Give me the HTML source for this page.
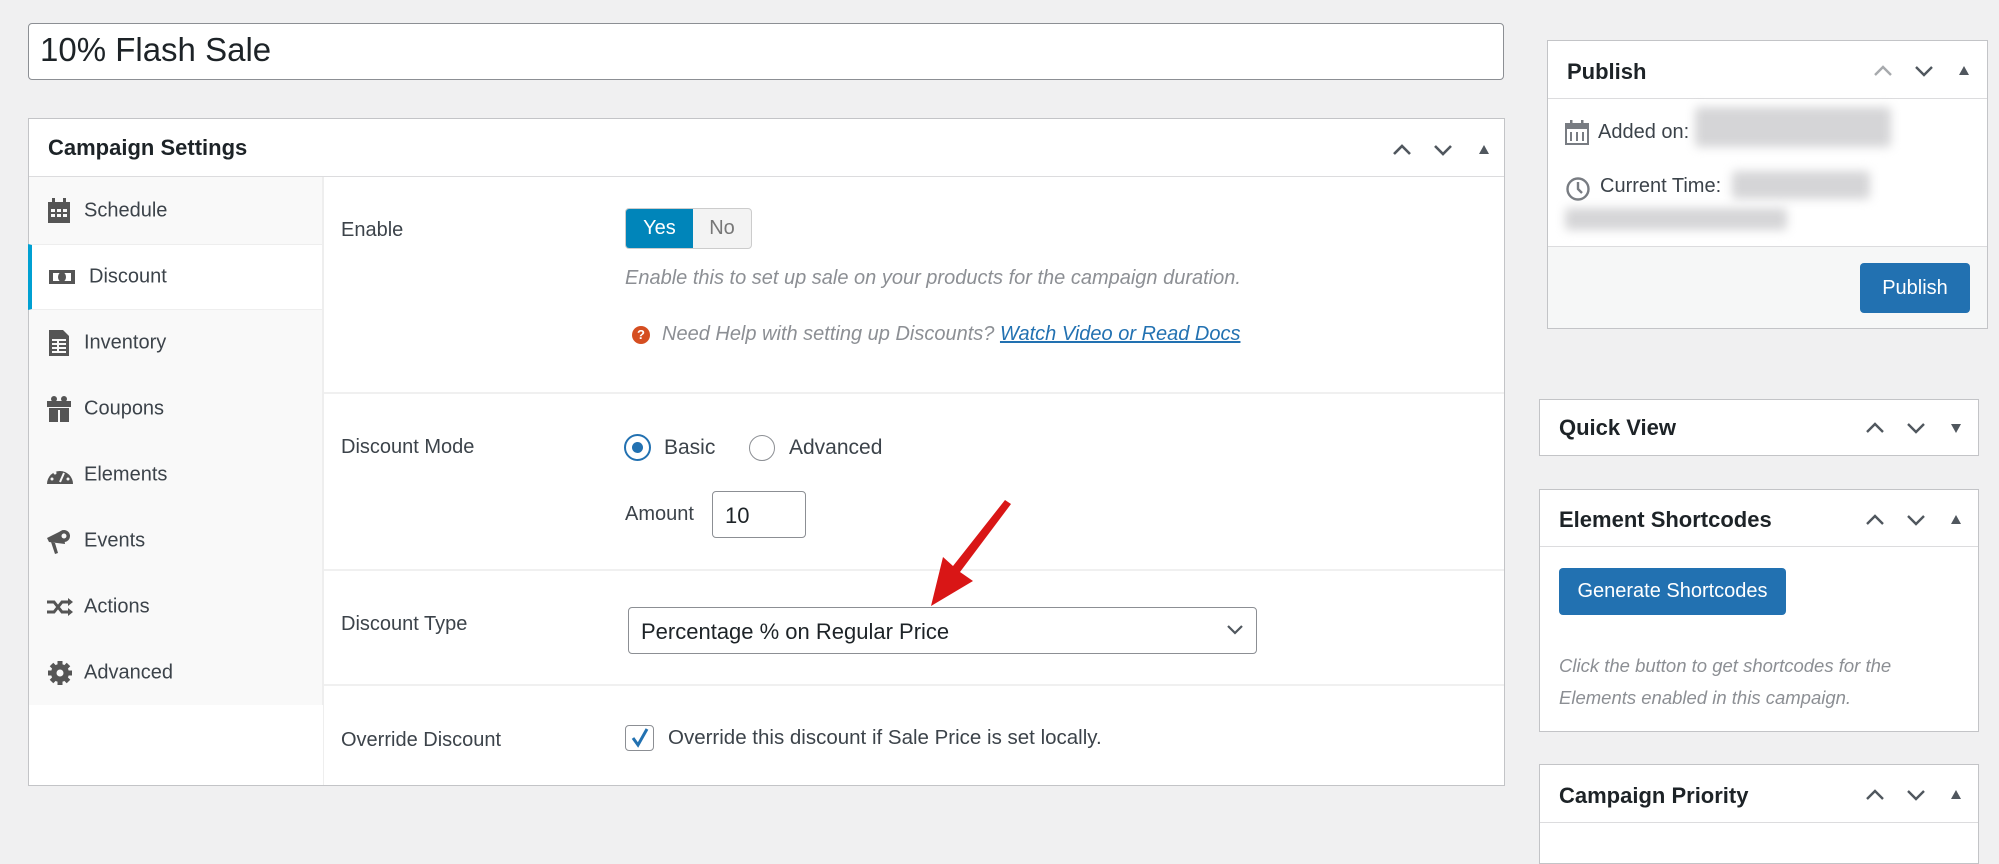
<!DOCTYPE html>
<html><head><meta charset="utf-8"><style>
*{box-sizing:border-box;margin:0;padding:0}
body{width:1999px;height:841px;background:#f0f0f1;font-family:"Liberation Sans",sans-serif;color:#3c434a;position:relative;overflow:hidden}
.a{position:absolute}
.box{position:absolute;background:#fff;border:1px solid #c3c4c7}
.hd{position:absolute;left:0;right:0;top:0;border-bottom:1px solid #dcdcde}
.ht{position:absolute;font-weight:bold;font-size:22px;color:#1d2327}
.lbl{position:absolute;left:341px;font-size:20px;color:#3c434a}
.nav{position:absolute;left:0;width:294px;height:66px;font-size:20px;color:#3c434a}
.nav span{position:absolute;left:55px;top:50%;transform:translateY(-50%)}
.nav svg{position:absolute;left:18px;top:50%;transform:translateY(-50%)}
.blur{position:absolute;background:#d5d5d7;filter:blur(5px);border-radius:4px}
</style></head><body>

<div class="a" style="left:28px;top:23px;width:1476px;height:57px;background:#fff;border:1px solid #8c8f94;border-radius:4px"></div>
<div class="a" style="left:40px;top:31px;font-size:33px;color:#1d2327">10% Flash Sale</div>

<div class="box" style="left:28px;top:118px;width:1477px;height:668px">
  <div class="hd" style="height:58px"></div>
  <div class="ht" style="left:19px;top:16px">Campaign Settings</div>
  <svg class="a" style="left:1362px;top:20px" width="110" height="22" viewBox="0 0 110 22">
    <path d="M3 15 L11 7 L19 15" stroke="#50575e" stroke-width="2.6" fill="none"/>
    <path d="M44 7 L52 15 L60 7" stroke="#50575e" stroke-width="2.6" fill="none"/>
    <path d="M88 15 L93 6 L98 15Z" fill="#50575e"/>
  </svg>
  <div class="a" style="left:0;top:58px;width:294px;height:528px;background:#f9f9f9;border-right:1px solid #eee"></div>
  <div class="a" style="left:294px;top:58px;width:1px;height:608px;background:#eee"></div>
  <div class="nav" style="top:59px"><svg width="24" height="26" viewBox="0 0 24 26"><rect x="1" y="4" width="22" height="21" fill="#555"/><rect x="5" y="0" width="3" height="6" fill="#555"/><rect x="16" y="0" width="3" height="6" fill="#555"/><g fill="#f9f9f9"><rect x="4" y="11" width="4" height="3"/><rect x="10" y="11" width="4" height="3"/><rect x="16" y="11" width="4" height="3"/><rect x="4" y="16" width="4" height="3"/><rect x="10" y="16" width="4" height="3"/><rect x="16" y="16" width="4" height="3"/></g></svg><span>Schedule</span></div>
  <div class="nav" style="top:125px;background:#fff;border-top:1px solid #eee;border-bottom:1px solid #eee;border-left:4px solid #00a0d2;left:-1px"><svg width="26" height="16" viewBox="0 0 26 16" style="left:17px"><rect x="0" y="1" width="26" height="14" fill="#555"/><rect x="4" y="4" width="18" height="8" fill="#fff"/><ellipse cx="13" cy="8" rx="4" ry="5" fill="#555"/></svg><span style="left:57px">Discount</span></div>
  <div class="nav" style="top:191px"><svg width="20" height="26" viewBox="0 0 20 26" style="left:20px"><path d="M0 0H14L20 6V26H0Z" fill="#555"/><g fill="#f9f9f9"><rect x="3" y="9" width="14" height="2"/><rect x="3" y="13" width="14" height="2"/><rect x="3" y="17" width="14" height="2"/><rect x="3" y="21" width="14" height="2"/><rect x="8" y="9" width="2" height="14"/></g></svg><span>Inventory</span></div>
  <div class="nav" style="top:257px"><svg width="24" height="26" viewBox="0 0 24 26"><rect x="0" y="5" width="24" height="6" fill="#555"/><rect x="2" y="12" width="20" height="14" fill="#555"/><circle cx="7" cy="3" r="3" fill="#555"/><circle cx="17" cy="3" r="3" fill="#555"/><rect x="11" y="14" width="2" height="12" fill="#f9f9f9"/></svg><span>Coupons</span></div>
  <div class="nav" style="top:323px"><svg width="26" height="18" viewBox="0 0 26 18"><path d="M0 18 A13 13 0 0 1 26 18Z" fill="#555"/><path d="M13 16 L17 7" stroke="#f9f9f9" stroke-width="2"/><circle cx="5" cy="13" r="1.5" fill="#f9f9f9"/><circle cx="8" cy="7" r="1.5" fill="#f9f9f9"/><circle cx="21" cy="13" r="1.5" fill="#f9f9f9"/></svg><span>Elements</span></div>
  <div class="nav" style="top:389px"><svg width="24" height="26" viewBox="0 0 24 26"><path d="M0 10 L16 2 L18 16 L2 14Z" fill="#555"/><circle cx="17" cy="8" r="6" fill="#555"/><circle cx="17" cy="8" r="2.5" fill="#f9f9f9"/><path d="M4 14 L8 26 L11 25 L8 15Z" fill="#555"/></svg><span>Events</span></div>
  <div class="nav" style="top:455px"><svg width="26" height="18" viewBox="0 0 26 18"><path d="M0 4H7L15 14H22M0 14H7L15 4H22" stroke="#555" stroke-width="3" fill="none"/><path d="M21 0L26 4L21 8Z M21 10L26 14L21 18Z" fill="#555"/></svg><span>Actions</span></div>
  <div class="nav" style="top:521px"><svg width="26" height="26" viewBox="0 0 26 26"><circle cx="13" cy="13" r="9" fill="#555"/><g stroke="#555" stroke-width="5"><path d="M13 1V25M1 13H25M4.5 4.5L21.5 21.5M21.5 4.5L4.5 21.5"/></g><circle cx="13" cy="13" r="3.5" fill="#f9f9f9"/></svg><span>Advanced</span></div>

  <div class="a" style="left:295px;right:0;top:273px;height:2px;background:#f0f0f0"></div>
  <div class="a" style="left:295px;right:0;top:450px;height:2px;background:#f0f0f0"></div>
  <div class="a" style="left:295px;right:0;top:565px;height:2px;background:#f0f0f0"></div>
</div>

<div class="lbl" style="top:219px">Enable</div>
<div class="a" style="left:625px;top:208px;width:127px;height:41px;border:1px solid #ccc;border-radius:4px;background:#f3f3f3;overflow:hidden">
  <div class="a" style="left:0;top:0;width:67px;height:41px;background:#0085ba;color:#fff;font-size:20px;text-align:center;line-height:39px">Yes</div>
  <div class="a" style="left:67px;top:0;width:58px;height:41px;color:#777;font-size:20px;text-align:center;line-height:39px">No</div>
</div>
<div class="a" style="left:625px;top:267px;font-size:20px;font-style:italic;color:#8c8f94;white-space:nowrap">Enable this to set up sale on your products for the campaign duration.</div>
<div class="a" style="left:632px;top:326px;width:18px;height:18px;border-radius:50%;background:#d54e21;color:#fff;font-size:13px;font-weight:bold;text-align:center;line-height:18px">?</div>
<div class="a" style="left:662px;top:323px;font-size:20px;font-style:italic;color:#8c8f94;white-space:nowrap">Need Help with setting up Discounts? <span style="color:#2271b1;text-decoration:underline">Watch Video or Read Docs</span></div>

<div class="lbl" style="top:436px">Discount Mode</div>
<div class="a" style="left:624px;top:434px;width:27px;height:27px;border-radius:50%;border:2px solid #2271b1;background:#fff"><div class="a" style="left:6px;top:6px;width:11px;height:11px;border-radius:50%;background:#2271b1"></div></div>
<div class="a" style="left:664px;top:436px;font-size:21px;color:#3c434a">Basic</div>
<div class="a" style="left:749px;top:435px;width:26px;height:26px;border-radius:50%;border:1px solid #8c8f94;background:#fff"></div>
<div class="a" style="left:789px;top:436px;font-size:21px;color:#3c434a">Advanced</div>
<div class="a" style="left:625px;top:503px;font-size:20px;color:#3c434a">Amount</div>
<div class="a" style="left:712px;top:491px;width:94px;height:47px;border:1px solid #8c8f94;border-radius:4px;background:#fff;font-size:22px;color:#1d2327;padding:11px 0 0 12px">10</div>

<div class="lbl" style="top:613px">Discount Type</div>
<div class="a" style="left:628px;top:607px;width:629px;height:47px;border:1px solid #8c8f94;border-radius:4px;background:#fff;font-size:22px;color:#1d2327;padding:11px 0 0 12px">Percentage % on Regular Price</div>
<svg class="a" style="left:1226px;top:624px" width="18" height="12" viewBox="0 0 18 12"><path d="M2 2L9 9L16 2" stroke="#50575e" stroke-width="2.2" fill="none"/></svg>

<div class="lbl" style="top:729px">Override Discount</div>
<div class="a" style="left:625px;top:725px;width:29px;height:26px;border:1px solid #8c8f94;border-radius:4px;background:#fff"></div>
<svg class="a" style="left:629px;top:726px" width="22" height="24" viewBox="0 0 22 24"><path d="M4 12 L9 19 L18 3" stroke="#2271b1" stroke-width="3" fill="none"/></svg>
<div class="a" style="left:668px;top:726px;font-size:20.5px;color:#3c434a;white-space:nowrap">Override this discount if Sale Price is set locally.</div>

<svg class="a" style="left:0;top:0" width="1999" height="841">
  <path d="M931 606 L943 557 L953 566 L1005 500 L1011 504 L960 572 L973 581 Z" fill="#d91616"/>
</svg>

<div class="box" style="left:1547px;top:40px;width:441px;height:289px">
  <div class="hd" style="height:58px"></div>
  <div class="ht" style="left:19px;top:18px">Publish</div>
  <svg class="a" style="left:324px;top:19px" width="110" height="22" viewBox="0 0 110 22"><path d="M3 15 L11 7 L19 15" stroke="#a7aaad" stroke-width="2.4" fill="none"/><path d="M44 7 L52 15 L60 7" stroke="#50575e" stroke-width="2.4" fill="none"/><path d="M87 15 L92 6 L97 15Z" fill="#50575e"/></svg>
  <svg class="a" style="left:17px;top:78px" width="24" height="26" viewBox="0 0 24 26"><rect x="1" y="5" width="22" height="20" fill="none" stroke="#787c82" stroke-width="2"/><rect x="1" y="5" width="22" height="5" fill="#787c82"/><rect x="5" y="1" width="2.5" height="6" fill="#787c82"/><rect x="16" y="1" width="2.5" height="6" fill="#787c82"/><g fill="#787c82"><rect x="5" y="13" width="2" height="9"/><rect x="11" y="13" width="2" height="9"/><rect x="17" y="13" width="2" height="9"/></g></svg>
  <div class="a" style="left:50px;top:80px;font-size:20px;color:#3c434a">Added on:</div>
  <div class="blur" style="left:147px;top:66px;width:196px;height:40px"></div>
  <svg class="a" style="left:17px;top:135px" width="26" height="26" viewBox="0 0 26 26"><circle cx="13" cy="13" r="10.5" fill="none" stroke="#787c82" stroke-width="2.4"/><path d="M13 6V13L17 17" stroke="#787c82" stroke-width="2.4" fill="none"/></svg>
  <div class="a" style="left:52px;top:134px;font-size:20px;color:#3c434a">Current Time:</div>
  <div class="blur" style="left:184px;top:130px;width:138px;height:28px"></div>
  <div class="blur" style="left:17px;top:167px;width:222px;height:22px"></div>
  <div class="a" style="left:0;right:0;top:205px;bottom:0;background:#f6f7f7;border-top:1px solid #dcdcde"></div>
  <div class="a" style="left:312px;top:222px;width:110px;height:50px;background:#2271b1;border-radius:4px;color:#fff;font-size:20px;text-align:center;line-height:50px">Publish</div>
</div>

<div class="box" style="left:1539px;top:399px;width:440px;height:57px">
  <div class="ht" style="left:19px;top:15px">Quick View</div>
  <svg class="a" style="left:324px;top:17px" width="110" height="22" viewBox="0 0 110 22"><path d="M3 15 L11 7 L19 15" stroke="#50575e" stroke-width="2.4" fill="none"/><path d="M44 7 L52 15 L60 7" stroke="#50575e" stroke-width="2.4" fill="none"/><path d="M87 7 L92 16 L97 7Z" fill="#50575e"/></svg>
</div>

<div class="box" style="left:1539px;top:489px;width:440px;height:243px">
  <div class="hd" style="height:57px"></div>
  <div class="ht" style="left:19px;top:17px">Element Shortcodes</div>
  <svg class="a" style="left:324px;top:19px" width="110" height="22" viewBox="0 0 110 22"><path d="M3 15 L11 7 L19 15" stroke="#50575e" stroke-width="2.4" fill="none"/><path d="M44 7 L52 15 L60 7" stroke="#50575e" stroke-width="2.4" fill="none"/><path d="M87 15 L92 6 L97 15Z" fill="#50575e"/></svg>
  <div class="a" style="left:19px;top:78px;width:227px;height:47px;background:#2271b1;border-radius:4px;color:#fff;font-size:20px;text-align:center;line-height:47px">Generate Shortcodes</div>
  <div class="a" style="left:19px;top:160px;width:405px;font-size:18.5px;font-style:italic;color:#8c8f94;line-height:32px">Click the button to get shortcodes for the Elements enabled in this campaign.</div>
</div>

<div class="box" style="left:1539px;top:764px;width:440px;height:100px">
  <div class="hd" style="height:58px"></div>
  <div class="ht" style="left:19px;top:18px">Campaign Priority</div>
  <svg class="a" style="left:324px;top:19px" width="110" height="22" viewBox="0 0 110 22"><path d="M3 15 L11 7 L19 15" stroke="#50575e" stroke-width="2.4" fill="none"/><path d="M44 7 L52 15 L60 7" stroke="#50575e" stroke-width="2.4" fill="none"/><path d="M87 15 L92 6 L97 15Z" fill="#50575e"/></svg>
</div>
</body></html>
